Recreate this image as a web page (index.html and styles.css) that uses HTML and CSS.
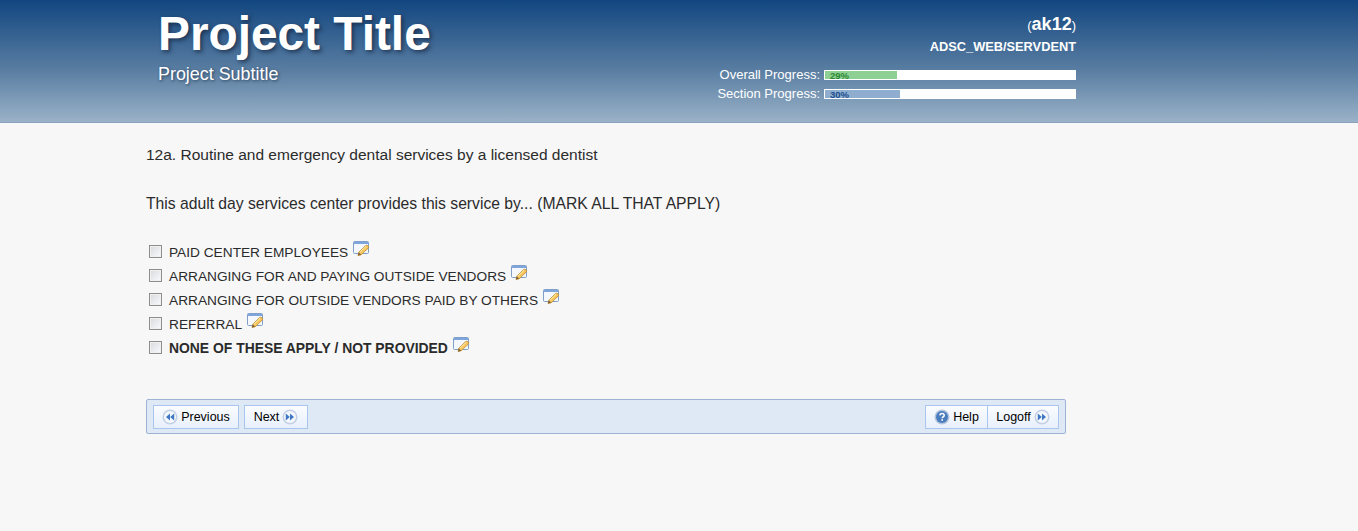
FILE: index.html
```html
<!DOCTYPE html>
<html lang="en">
<head>
<meta charset="utf-8">
<title>Project Title</title>
<link rel="stylesheet" href="styles.css">
</head>
<body>
<svg class="defs" width="0" height="0" aria-hidden="true">
  <symbol id="note" viewBox="0 0 17 16">
    <rect x="0.5" y="0.5" width="15" height="12" rx="1" fill="#f4f8fd" stroke="#7f9fc9"/>
    <rect x="1" y="1" width="14" height="2" fill="#7fa6dc"/>
    <path d="M5 14.5 L5.8 11.3 L12.6 4.5 Q14 3.8 15.2 5 Q16 6.2 15.2 7.2 L8.2 13.8 Z" fill="#f7c65e" stroke="#c08a30" stroke-width="0.8"/>
    <path d="M5 14.5 L5.8 11.3 L8.2 13.8 Z" fill="#7a6038"/>
    <path d="M6.8 11.3 L13.2 5.2" stroke="#fdeeb5" stroke-width="1"/>
  </symbol>
  <symbol id="back" viewBox="0 0 16 16">
    <circle cx="8" cy="8" r="7.5" fill="#c3cfe4"/>
    <circle cx="8" cy="8" r="6" fill="#f4f7fc"/>
    <path d="M8 4.5 V11.5 L4 8 Z M12.2 4.5 V11.5 L8.2 8 Z" fill="#3f78c4"/>
  </symbol>
  <symbol id="fwd" viewBox="0 0 16 16">
    <circle cx="8" cy="8" r="7.5" fill="#c3cfe4"/>
    <circle cx="8" cy="8" r="6" fill="#f4f7fc"/>
    <path d="M3.8 4.5 V11.5 L7.8 8 Z M8 4.5 V11.5 L12 8 Z" fill="#3f78c4"/>
  </symbol>
  <symbol id="help" viewBox="0 0 16 16">
    <circle cx="8" cy="8" r="7.5" fill="#b5c5dd"/>
    <circle cx="8" cy="8" r="6" fill="#4a7dbd"/>
    <path d="M5.9 6.4 Q6 4.5 8 4.5 Q10.2 4.5 10.2 6.3 Q10.2 7.4 9 8 Q8.2 8.4 8.2 9.3" fill="none" stroke="#fff" stroke-width="1.5"/>
    <rect x="7.4" y="10.2" width="1.6" height="1.6" fill="#fff"/>
  </symbol>
</svg>

<header class="header">
  <div class="header-inner">
    <div class="brand">
      <h1 class="title">Project Title</h1>
      <div class="subtitle">Project Subtitle</div>
    </div>
    <div class="status">
      <div class="user">(<b class="user-id">ak12</b>)</div>
      <div class="section-name">ADSC_WEB/SERVDENT</div>
      <div class="progress-row">
        <span class="progress-label">Overall Progress:</span>
        <div class="track"><div class="fill fill-green" style="width:72px"><span class="pct pct-green">29%</span></div></div>
      </div>
      <div class="progress-row">
        <span class="progress-label">Section Progress:</span>
        <div class="track"><div class="fill fill-blue" style="width:75px"><span class="pct pct-blue">30%</span></div></div>
      </div>
    </div>
  </div>
</header>

<main class="content">
  <p class="question">12a. Routine and emergency dental services by a licensed dentist</p>
  <p class="prompt">This adult day services center provides this service by... (MARK ALL THAT APPLY)</p>
  <ul class="options">
    <li class="option"><input class="check" type="checkbox"><span class="option-text">PAID CENTER EMPLOYEES</span><svg class="note"><use href="#note"/></svg></li>
    <li class="option"><input class="check" type="checkbox"><span class="option-text">ARRANGING FOR AND PAYING OUTSIDE VENDORS</span><svg class="note"><use href="#note"/></svg></li>
    <li class="option"><input class="check" type="checkbox"><span class="option-text">ARRANGING FOR OUTSIDE VENDORS PAID BY OTHERS</span><svg class="note"><use href="#note"/></svg></li>
    <li class="option"><input class="check" type="checkbox"><span class="option-text">REFERRAL</span><svg class="note"><use href="#note"/></svg></li>
    <li class="option"><input class="check" type="checkbox"><b class="option-text option-strong">NONE OF THESE APPLY / NOT PROVIDED</b><svg class="note"><use href="#note"/></svg></li>
  </ul>
  <nav class="toolbar">
    <div class="group">
      <button class="btn btn-prev" type="button"><svg class="btn-icon"><use href="#back"/></svg>Previous</button>
      <button class="btn btn-next" type="button">Next<svg class="btn-icon"><use href="#fwd"/></svg></button>
    </div>
    <div class="group group-joined">
      <button class="btn btn-help" type="button"><svg class="btn-icon"><use href="#help"/></svg>Help</button>
      <button class="btn btn-logoff" type="button">Logoff<svg class="btn-icon"><use href="#fwd"/></svg></button>
    </div>
  </nav>
</main>
</body>
</html>
```
FILE: styles.css
```css
* { box-sizing: border-box; }
html, body { margin: 0; padding: 0; }
body {
  height: 531px;
  overflow: hidden;
  background: #f7f7f7;
  color: #2b2b2b;
  font-family: "Liberation Sans", Arial, sans-serif;
}
.defs { display: block; height: 0; }

.header {
  height: 123px;
  background: linear-gradient(#124680 0%, #5a7ea2 58%, #9ab2c8 100%);
  border-bottom: 1px solid #8aa2bb;
  color: #fff;
}
.header-inner {
  width: 930px;
  margin-left: 146px;
  padding-left: 12px;
  display: flex;
  justify-content: space-between;
}
.title {
  margin: 6px 0 0;
  font-size: 47.8px;
  line-height: 55px;
  font-weight: bold;
  text-shadow: 2px 2px 4px rgba(20, 35, 60, .75);
}
.subtitle {
  margin-top: 2px;
  font-size: 17.9px;
  line-height: 22px;
  text-shadow: 1px 1px 3px rgba(20, 35, 60, .7);
}
.status { text-align: right; padding-top: 14px; }
.user { font-size: 13px; line-height: 20px; }
.user-id { font-size: 18px; }
.section-name { font-size: 12.8px; font-weight: bold; line-height: 20px; margin-top: 1px; }
.progress-row {
  display: flex;
  justify-content: flex-end;
  align-items: center;
  height: 19px;
}
.section-name + .progress-row { margin-top: 8px; }
.progress-label { font-size: 13px; margin-right: 4px; }
.track {
  width: 252px;
  height: 10px;
  background: #fff;
  padding: 1px;
  text-align: left;
}
.fill { height: 8px; }
.fill-green { background: #8ecf94; }
.fill-blue { background: #8faecf; }
.pct { display: block; font-size: 9.5px; line-height: 10px; padding-left: 5px; font-weight: bold; }
.pct-green { color: #2a8a33; }
.pct-blue { color: #1c4f8e; }

.content { width: 920px; margin-left: 146px; }
.question { margin: 23px 0 0; font-size: 15.5px; line-height: 18px; }
.prompt { margin: 31px 0 0; font-size: 15.7px; line-height: 18px; }
.options { list-style: none; margin: 26px 0 0; padding: 0; }
.option {
  display: flex;
  align-items: center;
  height: 24px;
  font-size: 13.7px;
}
.option-text { padding-top: 2px; }
.option-strong { font-size: 13.9px; }
.check {
  appearance: none;
  width: 13px;
  height: 13px;
  margin: 0 7px 0 3px;
  border: 1px solid #8e8e8e;
  background: linear-gradient(135deg, #d8dade, #fafafc);
  box-shadow: inset 0 0 0 1px #f0f0f0;
  flex: none;
}
.note { width: 17px; height: 16px; margin: -5px 0 0 5px; flex: none; }

.toolbar {
  margin-top: 40px;
  height: 35px;
  padding: 5px 6px;
  display: flex;
  justify-content: space-between;
  background: #dfe9f5;
  border: 1px solid #9db3d6;
  border-radius: 2px;
}
.group { display: flex; gap: 5px; }
.group-joined { gap: 0; }
.btn {
  display: flex;
  align-items: center;
  gap: 3px;
  height: 24px;
  padding: 0;
  font: 12.5px "Liberation Sans", Arial, sans-serif;
  color: #000;
  border: 1px solid #a9c6ef;
  background: linear-gradient(#fafcff, #e8f0fc);
  border-radius: 0;
  justify-content: center;
}
.btn-prev { width: 86px; }
.btn-next { width: 64px; }
.btn-help { width: 63px; }
.btn-logoff { width: 71px; border-left: 0; }
.btn-icon { width: 16px; height: 16px; flex: none; }
```
